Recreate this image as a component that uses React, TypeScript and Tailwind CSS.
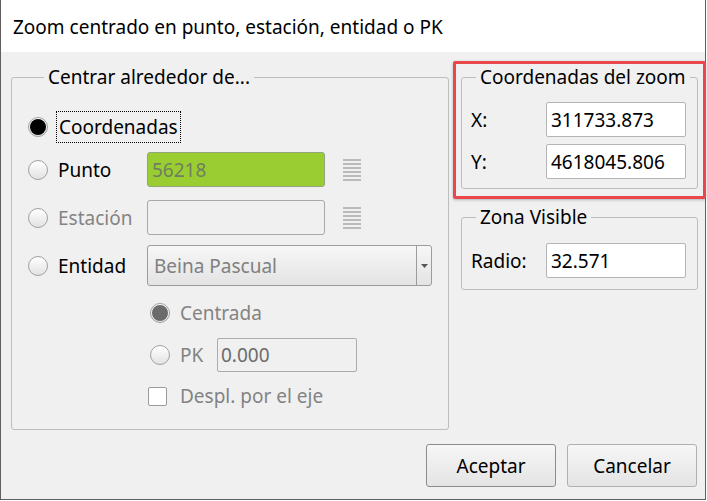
import React from "react";

function Radio({ checked = false, disabled = false }: { checked?: boolean; disabled?: boolean }) {
  return (
    <span className="flex h-[20px] w-[20px] shrink-0 items-center justify-center rounded-full border border-[#a0a0a0] bg-gradient-to-b from-[#ffffff] to-[#e2e2e2]">
      {checked && (
        <span className={`h-[16px] w-[16px] rounded-full ${disabled ? "bg-[#6b6b6b]" : "bg-black"}`} />
      )}
    </span>
  );
}

function ListIcon() {
  return (
    <svg width="20" height="24" viewBox="0 0 20 24" className="shrink-0">
      {[2, 6, 10, 14, 18, 22].map((y) => (
        <line key={y} x1="1" x2="19" y1={y} y2={y} stroke="#9c9c9c" strokeWidth="1.3" />
      ))}
    </svg>
  );
}

function Field({ value, className = "" }: { value: string; className?: string }) {
  return (
    <div className={`flex h-[35px] w-[140px] items-center rounded-[2px] border border-[#b4b4b4] bg-white px-[4px] text-black ${className}`}>
      {value}
    </div>
  );
}

export default function App() {
  return (
    <div className="relative h-[501px] w-[707px] bg-white font-['Noto_Sans',sans-serif] text-[19px] leading-[24px] text-black">
      <div className="flex h-[500px] w-[706px] flex-col border-x border-b border-[#5f5f5f] bg-[#f0f0f0]">
        <div className="flex h-[52px] items-center bg-white pl-[12px] pt-[2px]">
          Zoom centrado en punto, estación, entidad o PK
        </div>

        <div className="flex flex-1 gap-[12px] pl-[10px] pr-[7px] pt-[13px]">
          <fieldset className="h-[365px] w-[438px] min-w-0 shrink-0 rounded-[3px] border border-[#bdbdbd] px-[16px] pt-[21px]">
            <legend className="ml-[16px] whitespace-nowrap px-[4px]">Centrar alrededor de...</legend>

            <div className="flex h-[34px] items-center">
              <Radio checked />
              <span className="ml-[8px] border border-dotted border-black px-[2px] py-[3px]">Coordenadas</span>
            </div>

            <div className="mt-[8px] flex h-[35px] items-center">
              <Radio />
              <span className="ml-[10px] w-[89px]">Punto</span>
              <div className="flex h-[35px] w-[178px] items-center rounded-[3px] border border-[#8fa77a] bg-[#9acd32] px-[4px] text-[#6f7f60]">
                56218
              </div>
              <span className="ml-[17px]"><ListIcon /></span>
            </div>

            <div className="mt-[13px] flex h-[35px] items-center">
              <Radio />
              <span className="ml-[10px] w-[89px] text-[#848484]">Estación</span>
              <div className="h-[35px] w-[178px] rounded-[3px] border border-[#a8a8a8] bg-[#f0f0f0]" />
              <span className="ml-[17px]"><ListIcon /></span>
            </div>

            <div className="mt-[10px] flex h-[41px] items-center">
              <Radio />
              <span className="ml-[10px] w-[89px]">Entidad</span>
              <div className="flex h-[41px] w-[285px] items-stretch rounded-[3px] border border-[#9c9c9c] bg-gradient-to-b from-[#f7f7f7] to-[#e3e3e3] text-[#808080]">
                <span className="flex flex-1 items-center px-[6px]">Beina Pascual</span>
                <span className="flex w-[15px] items-center justify-center border-l border-[#9c9c9c]">
                  <svg width="7" height="4" viewBox="0 0 7 4"><path d="M0 0h7L3.5 4z" fill="#555" /></svg>
                </span>
              </div>
            </div>

            <div className="ml-[122px] mt-[16px] flex h-[22px] items-center text-[#838383]">
              <Radio checked disabled />
              <span className="ml-[10px]">Centrada</span>
            </div>

            <div className="ml-[122px] mt-[14px] flex h-[34px] items-center text-[#838383]">
              <Radio />
              <span className="ml-[10px] w-[37px]">PK</span>
              <div className="flex h-[34px] w-[140px] items-center rounded-[2px] border border-[#acacac] px-[3px] text-[#6b6b6b]">
                0.000
              </div>
            </div>

            <div className="ml-[120px] mt-[13px] flex h-[22px] items-center text-[#838383]">
              <span className="h-[19px] w-[19px] rounded-[2px] border border-[#9a9a9a] bg-white" />
              <span className="ml-[13px]">Despl. por el eje</span>
            </div>
          </fieldset>

          <div className="flex w-[237px] shrink-0 flex-col">
            <fieldset className="min-w-0 rounded-[3px] border border-[#bdbdbd] pb-[9px] pl-[9px] pr-[11px] pt-[13px]">
              <legend className="ml-[5px] whitespace-nowrap px-[4px]">Coordenadas del zoom</legend>
              <div className="flex items-center justify-between">
                <span>X:</span>
                <Field value="311733.873" />
              </div>
              <div className="mt-[7px] flex items-center justify-between">
                <span>Y:</span>
                <Field value="4618045.806" />
              </div>
            </fieldset>

            <fieldset className="mt-[16px] min-w-0 rounded-[3px] border border-[#bdbdbd] pb-[11px] pl-[9px] pr-[11px] pt-[14px]">
              <legend className="ml-[5px] whitespace-nowrap px-[4px]">Zona Visible</legend>
              <div className="flex items-center justify-between">
                <span>Radio:</span>
                <Field value="32.571" />
              </div>
            </fieldset>
          </div>
        </div>

        <div className="flex justify-end gap-[11px] pb-[12px] pr-[8px]">
          <button className="h-[43px] w-[130px] rounded-[3px] border border-[#8c8c8c] bg-gradient-to-b from-[#f6f6f6] to-[#e4e4e4]">
            Aceptar
          </button>
          <button className="h-[43px] w-[130px] rounded-[3px] border border-[#b0b0b0] bg-gradient-to-b from-[#f6f6f6] to-[#e4e4e4]">
            Cancelar
          </button>
        </div>
      </div>

      <div className="absolute left-[453px] top-[61px] h-[138px] w-[253px] rounded-[2px] border-[3px] border-[#e8474c] shadow-[0_1px_3px_rgba(0,0,0,0.25)]" />
    </div>
  );
}
